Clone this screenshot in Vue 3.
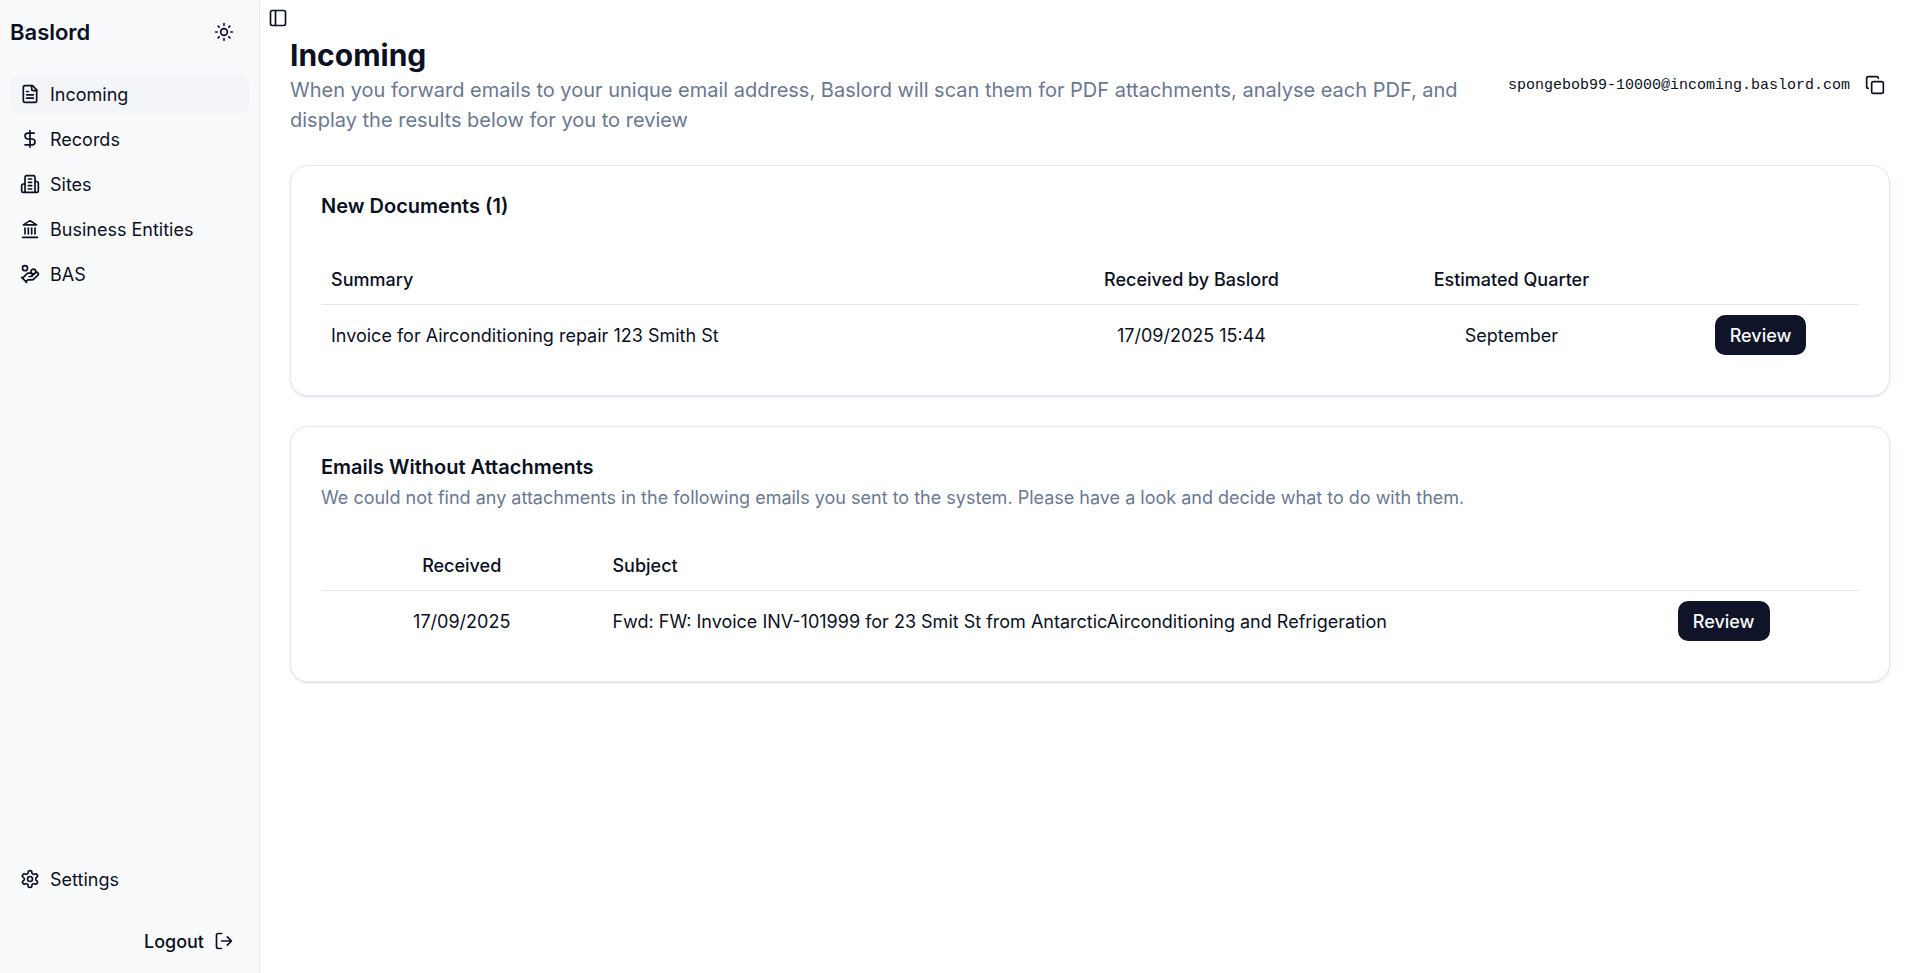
<script setup>
import { ref } from 'vue'

const sidebarOpen = ref(true)
const active = ref('Incoming')

const menu = [
	{
		title: 'Incoming',
		paths: [
			'M15 2H6a2 2 0 0 0-2 2v16a2 2 0 0 0 2 2h12a2 2 0 0 0 2-2V7Z',
			'M14 2v4a2 2 0 0 0 2 2h4',
			'M10 9H8',
			'M16 13H8',
			'M16 17H8'
		]
	},
	{
		title: 'Records',
		paths: ['M12 2v20', 'M17 5H9.5a3.5 3.5 0 0 0 0 7h5a3.5 3.5 0 0 1 0 7H6']
	},
	{
		title: 'Sites',
		paths: [
			'M6 22V4a2 2 0 0 1 2-2h8a2 2 0 0 1 2 2v18Z',
			'M6 12H4a2 2 0 0 0-2 2v6a2 2 0 0 0 2 2h2',
			'M18 9h2a2 2 0 0 1 2 2v9a2 2 0 0 1-2 2h-2',
			'M10 6h4',
			'M10 10h4',
			'M10 14h4',
			'M10 18h4'
		]
	},
	{
		title: 'Business Entities',
		paths: ['M3 22h18', 'M6 18v-7', 'M10 18v-7', 'M14 18v-7', 'M18 18v-7', 'M12 2l8 5H4z']
	},
	{
		title: 'BAS',
		paths: [
			'M11 15h2a2 2 0 1 0 0-4h-3c-.6 0-1.1.2-1.4.6L3 17',
			'm7 21 1.6-1.4c.3-.4.8-.6 1.4-.6h4c1.1 0 2.1-.4 2.8-1.2l4.6-4.4a2 2 0 0 0-2.75-2.91l-4.2 3.9',
			'm2 16 6 6',
			'M13.1 9a2.9 2.9 0 1 0 5.8 0a2.9 2.9 0 1 0-5.8 0',
			'M3 5a3 3 0 1 0 6 0a3 3 0 1 0-6 0'
		]
	}
]

const documents = [
	{
		id: 1,
		summary: 'Invoice for Airconditioning repair 123 Smith St',
		received: '17/09/2025 15:44',
		quarter: 'September'
	}
]

const emails = [
	{
		id: 1,
		received: '17/09/2025',
		subject: 'Fwd: FW: Invoice INV-101999 for 23 Smit St from AntarcticAirconditioning and Refrigeration'
	}
]

const address = 'spongebob99-10000@incoming.baslord.com'
const copyAddress = () => navigator.clipboard?.writeText(address)
</script>

<template>
	<div class="layout">
		<aside v-if="sidebarOpen" class="sidebar">
			<div class="sidebar-header">
				<span class="brand">Baslord</span>
				<button type="button" class="ghost" aria-label="Toggle theme">
					<svg class="icon" viewBox="0 0 24 24">
						<circle cx="12" cy="12" r="4" />
						<path d="M12 2v2M12 20v2M4.93 4.93l1.41 1.41M17.66 17.66l1.41 1.41M2 12h2M20 12h2M6.34 17.66l-1.41 1.41M19.07 4.93l-1.41 1.41" />
					</svg>
				</button>
			</div>

			<nav class="menu">
				<a
					v-for="item in menu"
					:key="item.title"
					href="#"
					class="menu-item"
					:class="{ active: active === item.title }"
					@click.prevent="active = item.title"
				>
					<svg class="icon" viewBox="0 0 24 24">
						<path v-for="d in item.paths" :key="d" :d="d" />
					</svg>
					<span>{{ item.title }}</span>
				</a>
			</nav>

			<div class="sidebar-footer">
				<a href="#" class="menu-item" @click.prevent>
					<svg class="icon" viewBox="0 0 24 24">
						<path d="M12.22 2h-.44a2 2 0 0 0-2 2v.18a2 2 0 0 1-1 1.73l-.43.25a2 2 0 0 1-2 0l-.15-.08a2 2 0 0 0-2.73.73l-.22.38a2 2 0 0 0 .73 2.73l.15.1a2 2 0 0 1 1 1.72v.51a2 2 0 0 1-1 1.74l-.15.09a2 2 0 0 0-.73 2.73l.22.38a2 2 0 0 0 2.73.73l.15-.08a2 2 0 0 1 2 0l.43.25a2 2 0 0 1 1 1.73V20a2 2 0 0 0 2 2h.44a2 2 0 0 0 2-2v-.18a2 2 0 0 1 1-1.73l.43-.25a2 2 0 0 1 2 0l.15.08a2 2 0 0 0 2.73-.73l.22-.39a2 2 0 0 0-.73-2.73l-.15-.08a2 2 0 0 1-1-1.74v-.5a2 2 0 0 1 1-1.74l.15-.09a2 2 0 0 0 .73-2.73l-.22-.38a2 2 0 0 0-2.73-.73l-.15.08a2 2 0 0 1-2 0l-.43-.25a2 2 0 0 1-1-1.73V4a2 2 0 0 0-2-2z" />
						<circle cx="12" cy="12" r="3" />
					</svg>
					<span>Settings</span>
				</a>
				<button type="button" class="ghost logout">
					Logout
					<svg class="icon" viewBox="0 0 24 24">
						<path d="M9 21H5a2 2 0 0 1-2-2V5a2 2 0 0 1 2-2h4" />
						<path d="m16 17 5-5-5-5M21 12H9" />
					</svg>
				</button>
			</div>
		</aside>

		<main class="content">
			<button
				type="button"
				class="toggle"
				aria-label="Toggle sidebar"
				@click="sidebarOpen = !sidebarOpen"
			>
				<svg class="icon" viewBox="0 0 24 24">
					<rect x="3" y="3" width="18" height="18" rx="2" />
					<path d="M9 3v18" />
				</svg>
			</button>

			<div class="page">
				<header class="page-header">
					<div>
						<h1>Incoming</h1>
						<p>
							When you forward emails to your unique email address, Baslord will scan them
							for PDF attachments, analyse each PDF, and display the results below for you
							to review
						</p>
					</div>
					<div class="address">
						<code>{{ address }}</code>
						<button type="button" class="copy" aria-label="Copy" @click="copyAddress">
							<svg class="icon" viewBox="0 0 24 24">
								<rect x="8" y="8" width="14" height="14" rx="2" />
								<path d="M4 16c-1.1 0-2-.9-2-2V4c0-1.1.9-2 2-2h10c1.1 0 2 .9 2 2" />
							</svg>
						</button>
					</div>
				</header>

				<section class="card">
					<div class="card-header">
						<h2>New Documents ({{ documents.length }})</h2>
					</div>
					<table class="documents">
						<thead>
							<tr>
								<th class="summary">Summary</th>
								<th class="center received">Received by Baslord</th>
								<th class="center quarter">Estimated Quarter</th>
								<th></th>
							</tr>
						</thead>
						<tbody>
							<tr v-for="doc in documents" :key="doc.id">
								<td>{{ doc.summary }}</td>
								<td class="center">{{ doc.received }}</td>
								<td class="center">{{ doc.quarter }}</td>
								<td class="center">
									<button type="button" class="review">Review</button>
								</td>
							</tr>
						</tbody>
					</table>
				</section>

				<section class="card">
					<div class="card-header">
						<h2>Emails Without Attachments</h2>
						<p>
							We could not find any attachments in the following emails you sent to the
							system. Please have a look and decide what to do with them.
						</p>
					</div>
					<table class="emails">
						<thead>
							<tr>
								<th class="center received">Received</th>
								<th class="subject">Subject</th>
								<th></th>
							</tr>
						</thead>
						<tbody>
							<tr v-for="email in emails" :key="email.id">
								<td class="center">{{ email.received }}</td>
								<td>{{ email.subject }}</td>
								<td class="center">
									<button type="button" class="review">Review</button>
								</td>
							</tr>
						</tbody>
					</table>
				</section>
			</div>
		</main>
	</div>
</template>

<style>
body {
	margin: 0;
	background: #fff;
}
</style>

<style scoped>
.layout {
	display: flex;
	min-height: 100vh;
	font-family: Inter, 'Liberation Sans', sans-serif;
	font-size: 18px;
	line-height: 25px;
	color: #0b1023;
}
.layout * {
	box-sizing: border-box;
}
button {
	font: inherit;
	color: inherit;
	background: none;
	border: 0;
	padding: 0;
	cursor: pointer;
}
.icon {
	width: 20px;
	height: 20px;
	flex-shrink: 0;
	fill: none;
	stroke: currentColor;
	stroke-width: 2;
	stroke-linecap: round;
	stroke-linejoin: round;
}

/* sidebar */
.sidebar {
	display: flex;
	flex-direction: column;
	flex-shrink: 0;
	width: 260px;
	height: 100vh;
	position: sticky;
	top: 0;
	padding: 10px;
	background: #f9fafc;
	border-right: 1px solid #e5e7eb;
	box-sizing: border-box;
}
.sidebar-header {
	display: flex;
	align-items: center;
	justify-content: space-between;
	height: 44px;
}
.brand {
	font-size: 22px;
	font-weight: 600;
}
.ghost {
	display: flex;
	align-items: center;
	gap: 10px;
	height: 44px;
	padding: 0 15px;
	font-weight: 500;
}
.menu {
	display: flex;
	flex-direction: column;
	gap: 5px;
	padding-top: 20px;
}
.menu-item {
	display: flex;
	align-items: center;
	gap: 10px;
	height: 40px;
	padding: 0 10px;
	border-radius: 10px;
	color: inherit;
	text-decoration: none;
}
.menu-item.active,
.menu-item:hover {
	background: #f4f5f8;
}
.sidebar-footer {
	display: flex;
	flex-direction: column;
	gap: 20px;
	margin-top: auto;
}
.logout {
	align-self: flex-end;
}

/* page */
.content {
	flex: 1;
	min-width: 0;
}
.toggle,
.copy {
	display: flex;
	align-items: center;
	justify-content: center;
	flex-shrink: 0;
}
.toggle {
	width: 35px;
	height: 35px;
}
.copy {
	width: 30px;
	height: 30px;
}
.page {
	display: flex;
	flex-direction: column;
	gap: 30px;
	padding: 0 30px 30px;
}
.page-header {
	display: flex;
	align-items: center;
	justify-content: space-between;
	gap: 30px;
}
h1 {
	margin: 0;
	font-size: 30px;
	line-height: 40px;
	font-weight: 700;
}
.page-header p {
	margin: 0;
	font-size: 20px;
	line-height: 30px;
	color: #6b7890;
}
.address {
	display: flex;
	align-items: center;
	gap: 10px;
	white-space: nowrap;
}
.address code {
	font-family: 'Liberation Mono', monospace;
	font-size: 15px;
}

/* cards */
.card {
	padding: 30px;
	border: 1px solid #e2e8f0;
	border-radius: 18px;
	box-shadow: 0 1px 3px 0 rgba(30, 41, 90, 0.1), 0 1px 2px -1px rgba(30, 41, 90, 0.2);
}
.card-header {
	display: flex;
	flex-direction: column;
	gap: 8px;
	padding-bottom: 30px;
}
.card-header h2 {
	margin: 0;
	font-size: 20px;
	line-height: 20px;
	font-weight: 600;
}
.card-header p {
	margin: 0;
	color: #6b7890;
}
.card-header h2:only-child {
	margin-bottom: 8px;
}
table {
	width: 100%;
	table-layout: fixed;
	border-collapse: separate;
	border-spacing: 0;
}
th {
	height: 51px;
	padding: 0 10px;
	border-bottom: 1px solid #e2e8f0;
	font-weight: 500;
	text-align: left;
}
td {
	height: 60px;
	padding: 0 10px;
}
.center {
	text-align: center;
}
.documents .summary {
	width: 45.6%;
}
.documents .received {
	width: 22%;
}
.documents .quarter {
	width: 19.6%;
}
.emails .received {
	width: 18.3%;
}
.emails .subject {
	width: 64.1%;
}
.review {
	height: 40px;
	padding: 0 15px;
	border-radius: 10px;
	background: #0f1428;
	color: #f8fafc;
	font-weight: 500;
}
</style>
